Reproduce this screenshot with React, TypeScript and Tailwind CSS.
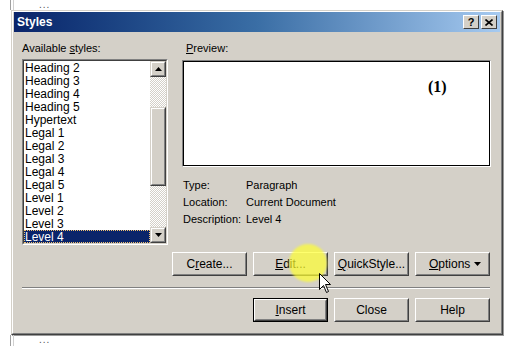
import React from 'react';

const items = [
  'Heading 2', 'Heading 3', 'Heading 4', 'Heading 5', 'Hypertext',
  'Legal 1', 'Legal 2', 'Legal 3', 'Legal 4', 'Legal 5',
  'Level 1', 'Level 2', 'Level 3', 'Level 4',
];

function Btn({ children, def = false, className = '' }: { children: React.ReactNode; def?: boolean; className?: string }) {
  return (
    <div className={`w-[75px] h-[24px] ${def ? 'border border-black' : ''} ${className}`}>
      <div className="h-full border border-t-white border-l-white border-b-[#404040] border-r-[#404040]">
        <div className="h-full flex items-center justify-center border border-t-[#d4d0c8] border-l-[#d4d0c8] border-b-[#808080] border-r-[#808080] text-[12px] text-black">
          {children}
        </div>
      </div>
    </div>
  );
}

function ArrowBtn({ up }: { up: boolean }) {
  return (
    <div className="w-[16px] h-[16px] bg-[#d4d0c8] border border-t-[#d4d0c8] border-l-[#d4d0c8] border-b-[#404040] border-r-[#404040]">
      <div className="h-full flex items-center justify-center border border-t-white border-l-white border-b-[#808080] border-r-[#808080]">
        <svg width="7" height="4" viewBox="0 0 7 4">
          {up ? <polygon points="3.5,0 7,4 0,4" fill="#000" /> : <polygon points="0,0 7,0 3.5,4" fill="#000" />}
        </svg>
      </div>
    </div>
  );
}

export default function App() {
  return (
    <div className="w-[514px] h-[346px] bg-white overflow-hidden relative font-['Liberation_Sans',Arial,sans-serif] text-black">
      {/* window behind */}
      <div className="h-[10px] flex">
        <div className="ml-[10px] w-px bg-[#a0a0a0]" />
        <div className="ml-[2px] w-px bg-[#d0d0d0]" />
        <div className="ml-[25px] text-[10px] leading-[10px] h-[10px] text-[#555] tracking-[1px]">...</div>
      </div>

      {/* dialog */}
      <div className="ml-[11px] w-[492px] h-[325px] bg-[#d4d0c8] border border-t-[#d4d0c8] border-l-[#d4d0c8] border-b-[#404040] border-r-[#404040] shadow-[1px_1px_0_#9a9a9a]">
        <div className="h-full border border-t-white border-l-white border-b-[#808080] border-r-[#808080] flex flex-col">
          {/* title bar */}
          <div className="h-[20px] mx-px flex items-center bg-gradient-to-r from-[#0a246a] via-[#3a6ea5] to-[#a6caf0] pl-[3px] pr-[3px]">
            <span className="text-white font-bold text-[12px] flex-1">Styles</span>
            <div className="flex gap-[2px]">
              <div className="w-[16px] h-[14px] bg-[#d4d0c8] border border-t-white border-l-white border-b-[#404040] border-r-[#404040] flex items-center justify-center font-bold text-[11px] leading-none">?</div>
              <div className="w-[16px] h-[14px] bg-[#d4d0c8] border border-t-white border-l-white border-b-[#404040] border-r-[#404040] flex items-center justify-center">
                <svg width="8" height="7" viewBox="0 0 8 7"><path d="M0.5 0.5 L7.5 6.5 M7.5 0.5 L0.5 6.5" stroke="#000" strokeWidth="1.6" /></svg>
              </div>
            </div>
          </div>

          {/* body */}
          <div className="flex pl-[9px] pr-[9px] pt-[10px]">
            {/* left column */}
            <div className="w-[146px] flex flex-col">
              <div className="text-[11px] leading-[13px] h-[13px]">Available <u>s</u>tyles:</div>
              <div className="mt-[4px] h-[186px] border border-t-[#808080] border-l-[#808080] border-b-white border-r-white">
                <div className="h-full border border-t-[#404040] border-l-[#404040] border-b-[#d4d0c8] border-r-[#d4d0c8] bg-white flex">
                  <div className="flex-1 overflow-hidden">
                    {items.map((it) => (
                      <div
                        key={it}
                        className={`h-[13px] pt-px text-[12px] leading-[12px] pl-px ${it === 'Level 4' ? 'bg-[#0a246a] text-white outline-1 outline-dotted outline-[#f0c070] -outline-offset-1' : ''}`}
                      >
                        {it}
                      </div>
                    ))}
                  </div>
                  <div className="w-[16px] flex flex-col bg-[repeating-conic-gradient(#ffffff_0_25%,#d4d0c8_0_50%)] bg-[length:2px_2px]">
                    <ArrowBtn up />
                    <div className="mt-[30px] h-[79px] bg-[#d4d0c8] border border-t-[#d4d0c8] border-l-[#d4d0c8] border-b-[#404040] border-r-[#404040]">
                      <div className="h-full border border-t-white border-l-white border-b-[#808080] border-r-[#808080]" />
                    </div>
                    <div className="flex-1" />
                    <ArrowBtn up={false} />
                  </div>
                </div>
              </div>
            </div>

            {/* right column */}
            <div className="ml-[14px] w-[309px] flex flex-col">
              <div className="text-[11px] leading-[13px] h-[13px] pl-[4px]"><u>P</u>review:</div>
              <div className="mt-[5px] h-[107px] border border-t-[#808080] border-l-[#808080] border-b-white border-r-white">
                <div className="h-full border border-black bg-white relative">
                  <span className="absolute left-[244px] top-[16px] font-['Liberation_Serif',serif] font-bold text-[16px] leading-[18px]">(1)</span>
                </div>
              </div>
              <div className="mt-[10px] flex flex-col text-[11px] pl-px">
                <div className="flex h-[17px] items-center"><span className="w-[63px]">Type:</span><span>Paragraph</span></div>
                <div className="flex h-[17px] items-center"><span className="w-[63px]">Location:</span><span>Current Document</span></div>
                <div className="flex h-[17px] items-center"><span className="w-[63px]">Description:</span><span>Level 4</span></div>
              </div>
            </div>
          </div>

          {/* action buttons */}
          <div className="mt-[7px] flex justify-end gap-[6px] pr-[11px]">
            <Btn>C<u>r</u>eate...</Btn>
            <Btn><u>E</u>dit...</Btn>
            <Btn><u>Q</u>uickStyle...</Btn>
            <Btn>
              <span className="flex-1 pl-[12px]"><u>O</u>ptions</span>
              <svg className="mr-[7px]" width="7" height="4" viewBox="0 0 7 4"><polygon points="0,0 7,0 3.5,4" fill="#000" /></svg>
            </Btn>
          </div>

          {/* separator */}
          <div className="mt-[11px] ml-[9px] mr-[11px] h-[2px] border-t border-t-[#808080] border-b border-b-white" />

          {/* bottom buttons */}
          <div className="mt-[9px] flex justify-end gap-[6px] pr-[11px]">
            <Btn def><u>I</u>nsert</Btn>
            <Btn>Close</Btn>
            <Btn>Help</Btn>
          </div>
        </div>
      </div>

      <div className="h-[11px] flex">
        <div className="ml-[10px] w-px bg-[#a0a0a0]" />
        <div className="ml-[2px] w-px bg-[#d0d0d0]" />
        <div className="ml-[25px] text-[10px] leading-[10px] text-[#555] tracking-[1px]">...</div>
      </div>

      {/* click highlight and cursor */}
      <div className="absolute left-[289px] top-[244px] w-[38px] h-[38px] rounded-full bg-[#ffff30]/70 blur-[1px]" />
      <svg className="absolute left-[319px] top-[273px]" width="13" height="21" viewBox="0 0 13 21">
        <path d="M0.5 0.5 L0.5 16.5 L4.5 12.5 L7.5 19.5 L9.5 18.5 L6.5 11.5 L11.5 11.5 Z" fill="#fff" stroke="#000" strokeWidth="1" />
      </svg>
    </div>
  );
}
